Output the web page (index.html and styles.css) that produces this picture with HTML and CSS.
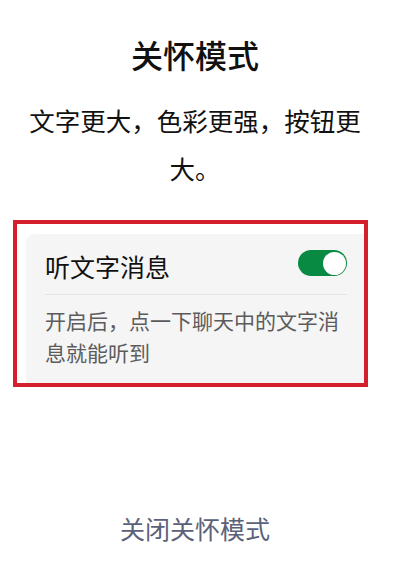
FILE: index.html
```html
<!DOCTYPE html>
<html lang="zh-CN">
<head>
<meta charset="utf-8">
<title>关怀模式</title>
<link rel="stylesheet" href="styles.css">
</head>
<body>
<main class="page">
  <h1 class="title">关怀模式</h1>
  <p class="subtitle">文字更大，色彩更强，按钮更大。</p>
  <section class="highlight">
    <div class="card">
      <div class="row">
        <span class="row-label">听文字消息</span>
        <span class="switch" role="switch" aria-checked="true"><span class="knob"></span></span>
      </div>
      <p class="desc">开启后，点一下聊天中的文字消息就能听到</p>
    </div>
  </section>
  <a class="close-link">关闭关怀模式</a>
</main>
</body>
</html>
```
FILE: styles.css
```css
html, body {
  margin: 0;
  padding: 0;
  background: #ffffff;
}
body {
  font-family: "Noto Sans CJK SC", "Noto Sans", sans-serif;
  color: #111111;
}
.page {
  width: 400px;
  height: 583px;
  box-sizing: border-box;
  display: flex;
  flex-direction: column;
  align-items: center;
  padding: 34px 10px 0 0;
}
.title {
  margin: 0;
  font-size: 32px;
  line-height: 40px;
  font-weight: 500;
  color: #111111;
  text-align: center;
}
.subtitle {
  margin: 22px 0 0 0;
  width: 350px;
  font-size: 25.5px;
  line-height: 48px;
  text-align: center;
  color: #111111;
}
.highlight {
  margin: 28px 0 0 0;
  align-self: flex-start;
  margin-left: 13px;
  width: 355px;
  box-sizing: border-box;
  border: 4.5px solid #d3202c;
  padding: 10px 0 0 9px;
  background: #ffffff;
}
.card {
  background: #f5f5f5;
  border-radius: 9px 0 0 0;
  padding: 0 17px 15px 19px;
}
.row {
  height: 60px;
  display: flex;
  align-items: center;
  justify-content: space-between;
  border-bottom: 1px solid #e4e4e4;
}
.row-label {
  font-size: 25px;
  line-height: 30px;
  color: #111111;
  margin-top: 3px;
}
.switch {
  width: 49px;
  height: 26px;
  border-radius: 13px;
  background: #088a42;
  display: flex;
  align-items: center;
  justify-content: flex-end;
  padding: 0 1.5px;
  box-sizing: border-box;
  margin-top: -2px;
}
.knob {
  width: 23px;
  height: 23px;
  border-radius: 50%;
  background: #ffffff;
}
.desc {
  margin: 0;
  padding-top: 10px;
  font-size: 21px;
  line-height: 31.5px;
  color: #5c5c5c;
}
.close-link {
  margin-top: 126px;
  font-size: 25px;
  line-height: 30px;
  color: #5b6179;
  text-decoration: none;
}
```
